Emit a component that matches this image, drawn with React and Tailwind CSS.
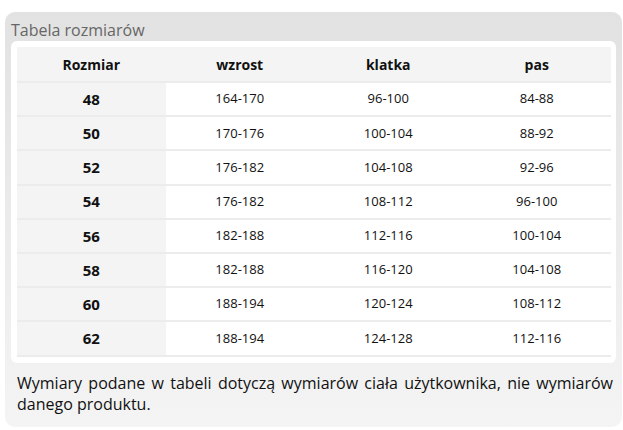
const rows = [
    ['48', '164-170', '96-100', '84-88'],
    ['50', '170-176', '100-104', '88-92'],
    ['52', '176-182', '104-108', '92-96'],
    ['54', '176-182', '108-112', '96-100'],
    ['56', '182-188', '112-116', '100-104'],
    ['58', '182-188', '116-120', '104-108'],
    ['60', '188-194', '120-124', '108-112'],
    ['62', '188-194', '124-128', '112-116'],
];

const App = () => {
    return (
        <div className="bg-white min-h-[430px] pt-[12px] pl-[5px]" style={{ fontFamily: '"Open Sans", "Noto Sans", sans-serif' }}>
            <div className="w-[617px] h-[415px] rounded-[10px] bg-gradient-to-b from-[#e2e2e2] to-[#f4f4f4] flex flex-col">
                <h2 className="pt-[7px] pl-[6px] text-[16px] leading-[22px] text-[#666] font-normal">Tabela rozmiarów</h2>
                <div className="mx-[6px] bg-white rounded-[6px] p-[6px]">
                    <div className="w-[594px]">
                        <div className="grid grid-cols-4 h-[36px] bg-[#f4f4f4] border-b-2 border-[#ececec] text-[14px] font-bold text-[#111]">
                            <div className="flex items-center justify-center">Rozmiar</div>
                            <div className="flex items-center justify-center">wzrost</div>
                            <div className="flex items-center justify-center">klatka</div>
                            <div className="flex items-center justify-center">pas</div>
                        </div>
                        {rows.map((row) => (
                            <div key={row[0]} className="grid grid-cols-4 h-[34.2px] border-b-2 border-[#ececec] text-[13px] text-[#111]">
                                <div className="flex items-center justify-center bg-[#f4f4f4] text-[15px] font-bold">{row[0]}</div>
                                <div className="flex items-center justify-center">{row[1]}</div>
                                <div className="flex items-center justify-center">{row[2]}</div>
                                <div className="flex items-center justify-center">{row[3]}</div>
                            </div>
                        ))}
                    </div>
                </div>
                <p className="mt-[10px] pl-[12px] pr-[9px] text-[16px] leading-[21px] text-[#111] text-justify">
                    Wymiary podane w tabeli dotyczą wymiarów ciała użytkownika, nie wymiarów danego produktu.
                </p>
            </div>
        </div>
    );
};

export default App;
